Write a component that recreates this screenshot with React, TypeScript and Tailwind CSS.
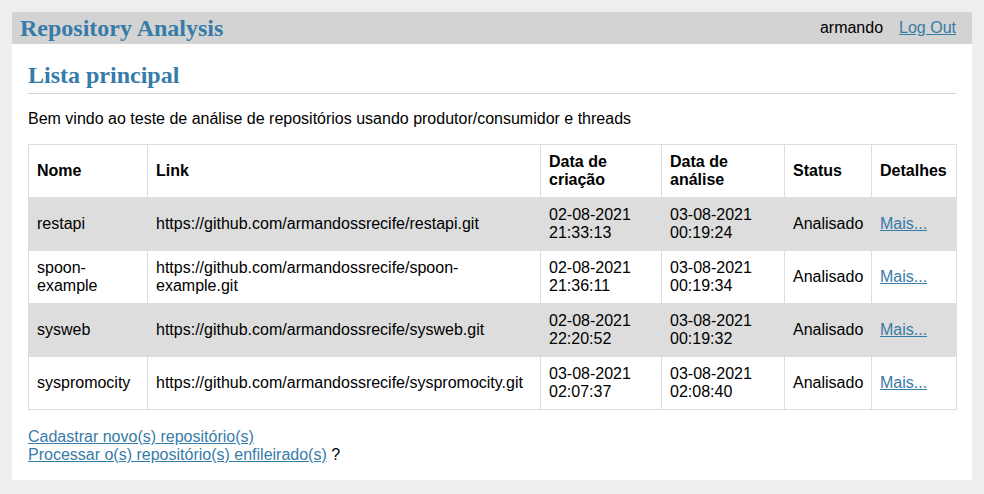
const repos = [
  {
    nome: "restapi",
    link: "https://github.com/armandossrecife/restapi.git",
    criacao: "02-08-2021 21:33:13",
    analise: "03-08-2021 00:19:24",
  },
  {
    nome: "spoon-example",
    link: "https://github.com/armandossrecife/spoon-example.git",
    criacao: "02-08-2021 21:36:11",
    analise: "03-08-2021 00:19:34",
  },
  {
    nome: "sysweb",
    link: "https://github.com/armandossrecife/sysweb.git",
    criacao: "02-08-2021 22:20:52",
    analise: "03-08-2021 00:19:32",
  },
  {
    nome: "syspromocity",
    link: "https://github.com/armandossrecife/syspromocity.git",
    criacao: "03-08-2021 02:07:37",
    analise: "03-08-2021 02:08:40",
  },
]

const cell = "border border-[#ddd] p-2 text-left align-middle"

export default function App() {
  return (
    <div className="min-h-screen bg-[#eee] p-3 font-['Liberation_Sans',Arial,sans-serif] text-base leading-[18px] text-black">
      <div className="mx-auto max-w-[960px] bg-white">
        <nav className="flex h-8 items-center bg-[#d3d3d3] px-2">
          <h1 className="flex-auto font-['Liberation_Serif','Times_New_Roman',serif] text-2xl font-bold leading-[28px] text-[#377ba8]">
            <a href="#">Repository Analysis</a>
          </h1>
          <ul className="flex">
            <li>
              <span className="block px-2">armando</span>
            </li>
            <li>
              <a href="#" className="block px-2 text-[#377ba8] underline">
                Log Out
              </a>
            </li>
          </ul>
        </nav>

        <section className="px-4 pb-4">
          <header className="border-b border-[#d3d3d3]">
            <h1 className="mt-[17px] mb-1 font-['Liberation_Serif','Times_New_Roman',serif] text-2xl font-bold leading-[28px] text-[#377ba8]">
              Lista principal
            </h1>
          </header>

          <p className="my-4">
            Bem vindo ao teste de análise de repositórios usando produtor/consumidor e threads
          </p>

          <table className="w-full table-fixed border-collapse">
            <colgroup>
              <col className="w-[119px]" />
              <col className="w-[393px]" />
              <col className="w-[121px]" />
              <col className="w-[123px]" />
              <col className="w-[87px]" />
              <col className="w-[85px]" />
            </colgroup>
            <tbody>
              <tr>
                <th className={cell}>Nome</th>
                <th className={cell}>Link</th>
                <th className={cell}>Data de criação</th>
                <th className={cell}>Data de análise</th>
                <th className={cell}>Status</th>
                <th className={cell}>Detalhes</th>
              </tr>
              {repos.map((r, i) => (
                <tr key={r.nome} className={i % 2 === 0 ? "bg-[#ddd]" : ""}>
                  <td className={cell}>{r.nome}</td>
                  <td className={cell}>{r.link}</td>
                  <td className={cell}>{r.criacao}</td>
                  <td className={cell}>{r.analise}</td>
                  <td className={cell}>Analisado</td>
                  <td className={cell}>
                    <a href="#" className="text-[#377ba8] underline">
                      Mais...
                    </a>
                  </td>
                </tr>
              ))}
            </tbody>
          </table>

          <div className="mt-[18px]">
            <a href="#" className="text-[#377ba8] underline">
              Cadastrar novo(s) repositório(s)
            </a>
            <br />
            <a href="#" className="text-[#377ba8] underline">
              Processar o(s) repositório(s) enfileirado(s)
            </a>{" "}
            ?
          </div>
        </section>
      </div>
    </div>
  )
}
